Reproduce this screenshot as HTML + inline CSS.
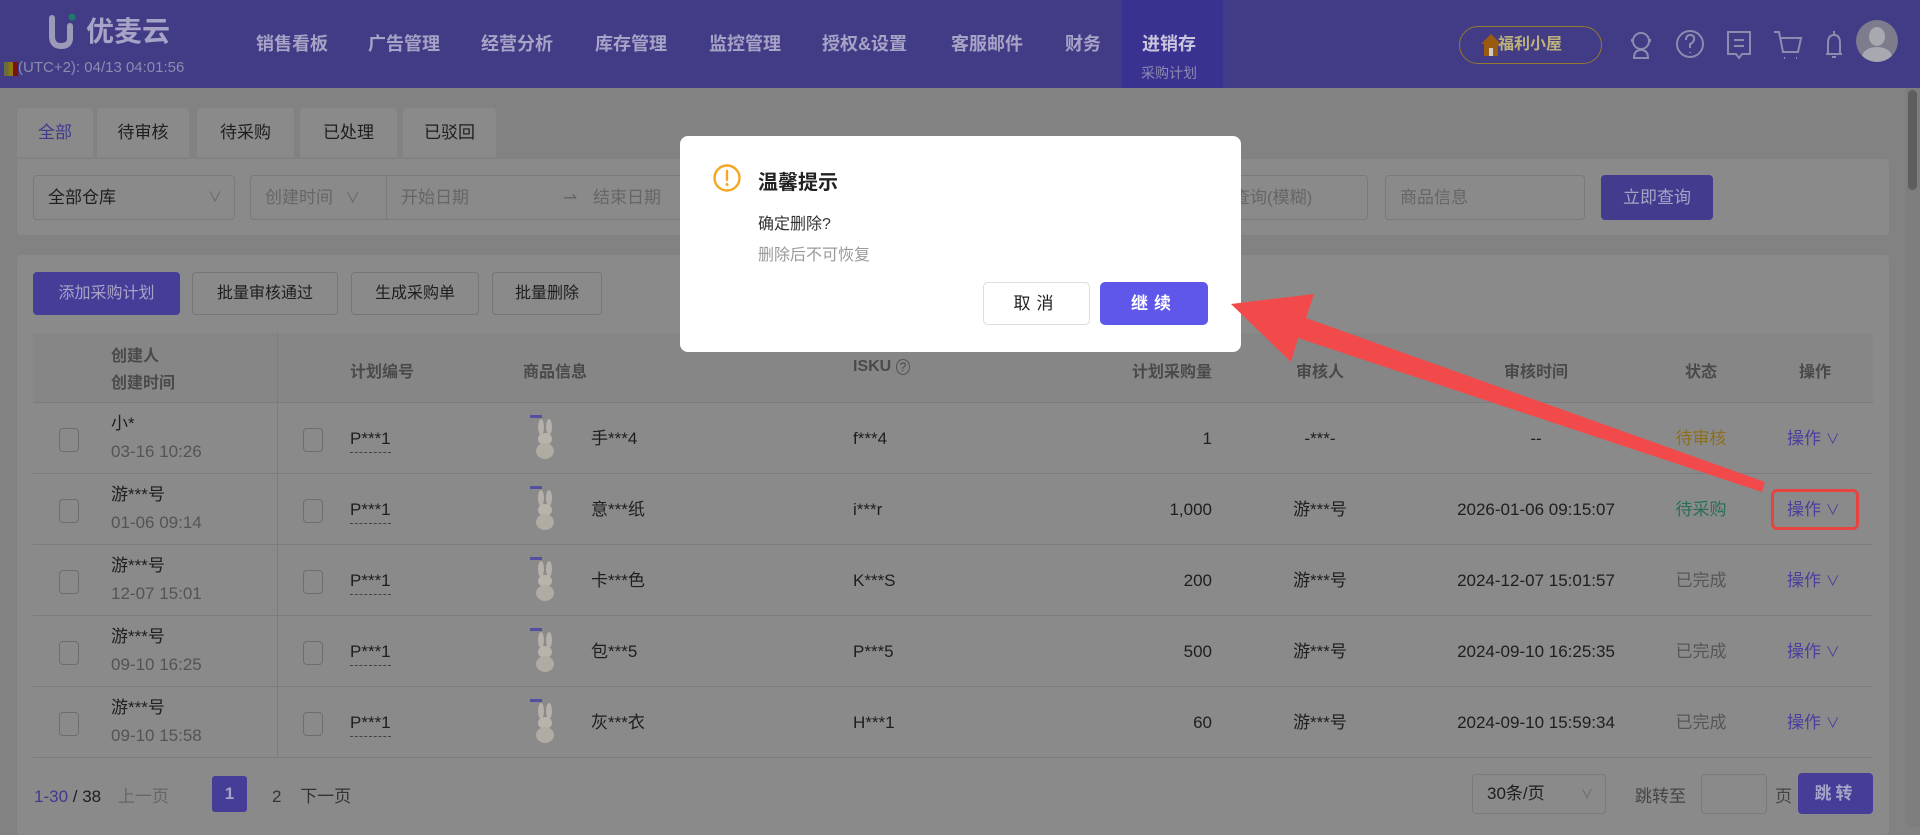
<!DOCTYPE html>
<html><head><meta charset="utf-8">
<style>
*{margin:0;padding:0;box-sizing:border-box}
body{width:1920px;height:827px;overflow:hidden;background:#828282;font-family:"Liberation Sans","Noto Sans CJK SC",sans-serif;position:relative;color:#1e1e1e}
.a{position:absolute}
.hdr{left:0;top:0;width:1920px;height:88px;background:#423b86}
.nav{top:30px;font-size:18px;font-weight:bold;color:#a7a3c6;white-space:nowrap}
.tab{top:108px;height:49px;background:#8a8a8a;border-radius:4px 4px 0 0;font-size:17px;line-height:49px;text-align:center;color:#1e1e1e}
.panel{background:#8a8a8a;border-radius:4px}
.inp{border:1px solid #7a7a7a;border-radius:4px;height:45px;font-size:17px;line-height:43px;color:#666;padding-left:14px}
.btn{top:272px;height:43px;border:1px solid #767676;border-radius:4px;background:#8a8a8a;font-size:16px;line-height:41px;text-align:center;color:#1e1e1e}
.th{font-size:16px;font-weight:bold;color:#4a4a4a}
.cell{font-size:17px;line-height:22px;color:#1e1e1e;white-space:nowrap}
.cb{width:20px;height:24px;border:1px solid #6e6e6e;border-radius:4px}
.line{height:1px;background:#7c7c7c;left:33px;width:1840px}
.g{color:#545454}
.op{color:#4a3fa0;font-size:17px;line-height:22px}
.rab{width:30px;height:44px}
</style></head><body>
<div class="a hdr"></div>
<div class="a" style="left:1122px;top:0;width:101px;height:88px;background:#3a3290"></div>
<svg class="a" style="left:46px;top:12px" width="34" height="40"><path d="M6 6 V24 Q6 34 15 34 Q24 34 24 26" stroke="#9d9ab8" stroke-width="6" fill="none" stroke-linecap="round"/><path d="M24 26 V14" stroke="#9d9ab8" stroke-width="6" stroke-linecap="round"/><circle cx="26" cy="5" r="3.5" fill="#1f7a6a"/></svg>
<div class="a" style="left:86px;top:10px;font-size:28px;color:#a7a3c6;font-weight:bold">优麦云</div>
<div class="a" style="left:4px;top:62px;width:14px;height:14px;background:linear-gradient(90deg,#6b6a40 33%,#8a7a10 33%,#8a7a10 66%,#801010 66%)"></div>
<div class="a" style="left:18px;top:59px;font-size:15px;color:#8e8ab0">(UTC+2): 04/13 04:01:56</div>
<div class="a nav" style="left:256px">销售看板</div>
<div class="a nav" style="left:368px">广告管理</div>
<div class="a nav" style="left:481px">经营分析</div>
<div class="a nav" style="left:595px">库存管理</div>
<div class="a nav" style="left:709px">监控管理</div>
<div class="a nav" style="left:822px">授权&amp;设置</div>
<div class="a nav" style="left:951px">客服邮件</div>
<div class="a nav" style="left:1065px">财务</div>
<div class="a nav" style="left:1142px;color:#c9c6de">进销存</div>
<div class="a" style="left:1141px;top:63px;font-size:14px;color:#8e8ab0">采购计划</div>
<div class="a" style="left:1459px;top:26px;width:143px;height:38px;border:1px solid #8f7a30;border-radius:19px;font-size:16px;color:#bdb27a;line-height:36px;padding-left:38px;font-weight:bold">福利小屋</div>
<svg class="a" style="left:1480px;top:33px" width="22" height="24"><path d="M11 1 L21 11 H18 V23 H4 V11 H1 Z" fill="#9a5a10"/><rect x="9" y="15" width="4" height="8" fill="#ccc"/></svg>
<svg class="a" style="left:1626px;top:28px" width="240" height="34" fill="none" stroke="#8e8ab0" stroke-width="2">
<circle cx="15" cy="13" r="8"/><path d="M6 14 V11 M24 14 V11 M8 30 Q8 22 15 22 Q22 22 22 30 Z"/>
<circle cx="64" cy="16" r="13"/><path d="M60 12 Q60 7 64 7 Q69 7 68 12 Q67 15 64 16 V20 M64 24 V25"/>
<path d="M102 4 H124 V26 H116 L113 30 L110 26 H102 Z M108 12 H118 M108 18 H118"/>
<path d="M148 4 H153 L157 24 H172 L175 10 H155 M158 30 h1 M170 30 h1"/>
<path d="M200 26 H216 M202 26 V15 Q202 7 208 7 Q214 7 214 15 V26 M206 29 H210 M208 3 V6"/>
</svg>
<div class="a" style="left:1856px;top:20px;width:42px;height:42px;border-radius:50%;background:#7c7c8c;overflow:hidden"><div class="a" style="left:13px;top:7px;width:16px;height:19px;border-radius:50%;background:#a8a8b0"></div><div class="a" style="left:6px;top:27px;width:30px;height:20px;border-radius:50%;background:#a8a8b0"></div></div>
<div class="a" style="left:1906px;top:88px;width:14px;height:739px;background:#7e7e7e"></div>
<div class="a" style="left:1908px;top:90px;width:9px;height:100px;border-radius:5px;background:#5e5e5e"></div>
<div class="a tab" style="left:17px;width:76px;color:#3f3a8e">全部</div>
<div class="a tab" style="left:97px;width:92px">待审核</div>
<div class="a tab" style="left:197px;width:97px">待采购</div>
<div class="a tab" style="left:300px;width:97px">已处理</div>
<div class="a tab" style="left:403px;width:93px">已驳回</div>
<div class="a panel" style="left:17px;top:159px;width:1872px;height:76px"></div>
<div class="a inp" style="left:33px;top:175px;width:202px;color:#1e1e1e">全部仓库<span class="a" style="right:12px;top:0;color:#666;font-size:14px">∨</span></div>
<div class="a inp" style="left:250px;top:175px;width:440px">创建时间 <span style="font-size:14px;margin-left:8px">∨</span><span class="a" style="left:135px;top:0;height:43px;border-left:1px solid #7a7a7a;padding-left:14px">开始日期</span><span class="a" style="left:312px">⇀</span><span class="a" style="left:342px">结束日期</span></div>
<div class="a inp" style="left:1150px;top:175px;width:218px">计划编号查询(模糊)</div>
<div class="a inp" style="left:1385px;top:175px;width:200px">商品信息</div>
<div class="a" style="left:1601px;top:175px;width:112px;height:45px;background:#433c8e;border-radius:4px;color:#a7a3c6;font-size:17px;line-height:45px;text-align:center">立即查询</div>
<div class="a panel" style="left:17px;top:255px;width:1872px;height:580px"></div>
<div class="a btn" style="left:33px;width:147px;background:#463d98;border-color:#463d98;color:#a7a3c6">添加采购计划</div>
<div class="a btn" style="left:192px;width:146px">批量审核通过</div>
<div class="a btn" style="left:351px;width:128px">生成采购单</div>
<div class="a btn" style="left:492px;width:110px">批量删除</div>
<div class="a" style="left:33px;top:333px;width:1840px;height:70px;background:#868686"></div>
<div class="a th" style="left:111px;top:343px;line-height:27px">创建人<br>创建时间</div>
<div class="a" style="left:277px;top:333px;width:1px;height:425px;background:#7c7c7c"></div>
<div class="a th" style="left:350px;top:358px">计划编号</div>
<div class="a th" style="left:523px;top:358px">商品信息</div>
<div class="a th" style="left:853px;top:358px">ISKU <span style="font-weight:normal;font-size:12px;border:1px solid #555;border-radius:50%;padding:0 3px">?</span></div>
<div class="a th" style="left:1100px;top:358px;width:112px;text-align:right">计划采购量</div>
<div class="a th" style="left:1270px;top:358px;width:100px;text-align:center">审核人</div>
<div class="a th" style="left:1486px;top:358px;width:100px;text-align:center">审核时间</div>
<div class="a th" style="left:1671px;top:358px;width:60px;text-align:center">状态</div>
<div class="a th" style="left:1785px;top:358px;width:60px;text-align:center">操作</div>
<div class="a line" style="top:402px"></div>
<div class="a line" style="top:473px"></div>
<div class="a line" style="top:544px"></div>
<div class="a line" style="top:615px"></div>
<div class="a line" style="top:686px"></div>
<div class="a line" style="top:757px"></div>
<div id="rows"></div>
<script>
var d=[["小*","03-16 10:26","手***4","f***4","1","-***-","--","待审核","#8c6f1e"],
["游***号","01-06 09:14","意***纸","i***r","1,000","游***号","2026-01-06 09:15:07","待采购","#2a6f55"],
["游***号","12-07 15:01","卡***色","K***S","200","游***号","2024-12-07 15:01:57","已完成","#575757"],
["游***号","09-10 16:25","包***5","P***5","500","游***号","2024-09-10 16:25:35","已完成","#575757"],
["游***号","09-10 15:58","灰***衣","H***1","60","游***号","2024-09-10 15:59:34","已完成","#575757"]];
var h="";
d.forEach(function(r,i){var y=403+i*71,t=y+25;
h+='<div class="a cb" style="left:59px;top:'+(y+25)+'px"></div>';
h+='<div class="a cell" style="left:111px;top:'+(y+10)+'px">'+r[0]+'</div>';
h+='<div class="a cell g" style="left:111px;top:'+(y+38)+'px">'+r[1]+'</div>';
h+='<div class="a cb" style="left:303px;top:'+(y+25)+'px"></div>';
h+='<div class="a cell" style="left:350px;top:'+t+'px;border-bottom:1px dashed #444;padding-bottom:2px">P***1</div>';
h+='<svg class="a rab" style="left:530px;top:'+(y+12)+'px" viewBox="0 0 30 44"><rect x="0" y="0" width="12" height="3" fill="#5450a0"/><ellipse cx="11" cy="12" rx="3" ry="8" fill="#b5b0a8"/><ellipse cx="19" cy="12" rx="3" ry="8" fill="#b5b0a8"/><ellipse cx="15" cy="24" rx="7" ry="6" fill="#b8b3ab"/><ellipse cx="15" cy="36" rx="9" ry="8" fill="#b0aba3"/></svg>';
[[591,r[2],''],[853,r[3],''],[1100,r[4],'width:112px;text-align:right;'],[1250,r[5],'width:140px;text-align:center;'],[1436,r[6],'width:200px;text-align:center;']].forEach(function(c){
h+='<div class="a cell" style="left:'+c[0]+'px;'+c[2]+'top:'+t+'px">'+c[1]+'</div>';});
h+='<div class="a cell" style="left:1661px;width:80px;text-align:center;top:'+t+'px;color:'+r[8]+'">'+r[7]+'</div>';
h+='<div class="a op" style="left:1787px;top:'+t+'px">操作 <span style="font-size:14px">∨</span></div>';
});
document.getElementById("rows").innerHTML=h;
</script>
<div class="a" style="left:34px;top:782px;font-size:17px"><span style="color:#3f3a8e">1-30</span> / 38 <span style="color:#666;margin-left:12px">上一页</span></div>
<div class="a" style="left:212px;top:776px;width:35px;height:36px;background:#463d98;border-radius:3px;color:#a7a3c6;font-size:17px;text-align:center;line-height:36px;font-weight:bold">1</div>
<div class="a" style="left:272px;top:782px;font-size:17px;color:#333">2 <span style="margin-left:14px">下一页</span></div>
<div class="a inp" style="left:1472px;top:774px;width:134px;height:40px;line-height:38px;color:#1e1e1e">30条/页<span class="a" style="right:12px;color:#666;font-size:12px">∨</span></div>
<div class="a" style="left:1635px;top:782px;font-size:17px;color:#444">跳转至</div>
<div class="a" style="left:1701px;top:774px;width:66px;height:40px;border:1px solid #7a7a7a;border-radius:4px"></div>
<div class="a" style="left:1775px;top:782px;font-size:17px;color:#444">页</div>
<div class="a" style="left:1798px;top:773px;width:75px;height:41px;background:#463d98;border-radius:4px;color:#a7a3c6;font-size:17px;text-align:center;line-height:41px;font-weight:bold;letter-spacing:4px">跳转</div>
<div class="a" style="left:1771px;top:489px;width:88px;height:41px;border:3px solid #e8443f;border-radius:6px"></div>
<div class="a" style="left:680px;top:136px;width:561px;height:216px;background:#fff;border-radius:8px"></div>
<svg class="a" style="left:712px;top:163px" width="30" height="30"><circle cx="15" cy="15" r="12.5" fill="none" stroke="#f5a623" stroke-width="2.4"/><path d="M15 8 V17" stroke="#f5a623" stroke-width="2.4" stroke-linecap="round"/><circle cx="15" cy="21.5" r="1.5" fill="#f5a623"/></svg>
<div class="a" style="left:758px;top:166px;font-size:20px;font-weight:bold;color:#222">温馨提示</div>
<div class="a" style="left:758px;top:210px;font-size:16px;color:#333">确定删除?</div>
<div class="a" style="left:758px;top:241px;font-size:16px;color:#9a9a9a">删除后不可恢复</div>
<div class="a" style="left:983px;top:282px;width:107px;height:43px;border:1px solid #ddd;border-radius:5px;font-size:17px;text-align:center;line-height:41px;color:#222;letter-spacing:6px">取消</div>
<div class="a" style="left:1100px;top:282px;width:108px;height:43px;background:#5f57ea;border-radius:5px;font-size:17px;text-align:center;line-height:43px;color:#fff;letter-spacing:6px;font-weight:bold">继续</div>
<svg class="a" style="left:0;top:0" width="1920" height="827"><polygon points="1231,304 1314,294 1306,318 1765,482 1762,492 1298,338 1291,362" fill="#f24a4a"/></svg>
</body></html>
